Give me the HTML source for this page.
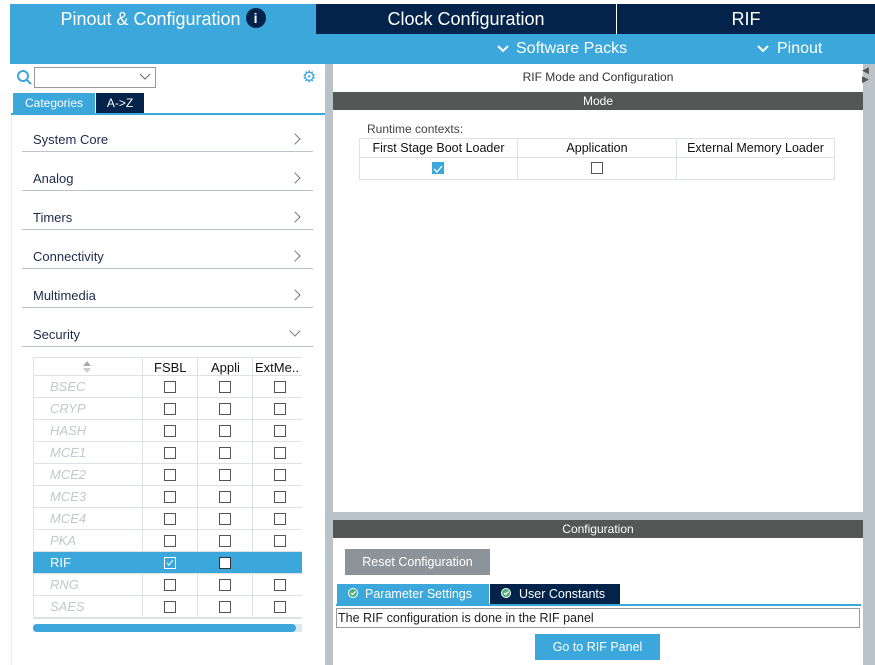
<!DOCTYPE html><html><head><style>
*{margin:0;padding:0;box-sizing:border-box}
body{width:875px;height:665px;overflow:hidden;background:#fff;font-family:"Liberation Sans",sans-serif;position:relative}
.a{position:absolute}
.cb{position:absolute;width:12px;height:12px;border:1px solid #555;background:#fff}
.cat{position:absolute;left:22px;width:291px;height:39px;border-bottom:1px solid #b9c3c9;font-size:13px;color:#1c2a4a}
.cat span{position:absolute;left:11px;bottom:4px}
.cat i{position:absolute;right:14px;bottom:8px;width:8px;height:8px;border-right:1px solid #777;border-top:1px solid #777;transform:rotate(45deg)}
.row{position:absolute;left:33px;width:269px;height:22px;border-bottom:1px solid #dde2e5}
.row span{position:absolute;left:17px;top:3px;font-style:italic;color:#c2c8cc;font-size:13px}
</style></head><body>
<div class="a" style="left:10px;top:4px;width:306px;height:30px;background:#3ca7db;color:#fff;font-size:18px;text-align:center;line-height:30px">Pinout &amp; Configuration <span style="display:inline-block;width:20px;height:20px;border-radius:50%;background:#03234b;color:#fff;font-size:14px;line-height:20px;font-weight:bold;vertical-align:2px">i</span></div>
<div class="a" style="left:316px;top:4px;width:300px;height:30px;background:#03234b;color:#fff;font-size:18px;text-align:center;line-height:30px">Clock Configuration</div>
<div class="a" style="left:617px;top:4px;width:258px;height:30px;background:#03234b;color:#fff;font-size:18px;text-align:center;line-height:30px">RIF</div>
<div class="a" style="left:10px;top:34px;width:865px;height:30px;background:#3ca7db"></div>
<div class="a" style="left:516px;top:40px;color:#fff;font-size:16px">Software Packs</div>
<div class="a" style="left:777px;top:40px;color:#fff;font-size:16px">Pinout</div>
<svg class="a" style="left:496px;top:44px" width="14" height="10"><path d="M2 2l5 5 5-5" stroke="#fff" stroke-width="2" fill="none"/></svg>
<svg class="a" style="left:756px;top:44px" width="14" height="10"><path d="M2 2l5 5 5-5" stroke="#fff" stroke-width="2" fill="none"/></svg>
<!-- left panel -->
<svg class="a" style="left:16px;top:69px" width="18" height="16"><circle cx="7" cy="7" r="5" stroke="#3ca7db" stroke-width="2" fill="none"/><path d="M11 11l4 4" stroke="#3ca7db" stroke-width="2"/></svg>
<div class="a" style="left:34px;top:67px;width:122px;height:21px;border:1px solid #999"></div>
<svg class="a" style="left:139px;top:72px" width="12" height="10"><path d="M1 2l5 5 5-5" stroke="#666" fill="none"/></svg>
<div class="a" style="left:302px;top:67px;font-size:16px;color:#3ca7db">⚙</div>
<div class="a" style="left:13px;top:93px;width:82px;height:20px;background:#3ca7db;color:#fff;font-size:12px;text-align:center;line-height:20px">Categories</div>
<div class="a" style="left:96px;top:93px;width:48px;height:20px;background:#03234b;color:#fff;font-size:12px;text-align:center;line-height:20px">A-&gt;Z</div>
<div class="a" style="left:11px;top:113px;width:314px;height:2px;background:#3ca7db"></div>
<div class="a" style="left:11px;top:115px;width:1px;height:550px;background:#e8ecee"></div>
<div class="a" style="left:325px;top:64px;width:8px;height:601px;background:#b9c3c9"></div>
<div class="cat" style="top:113px"><span>System Core</span><i></i></div>
<div class="cat" style="top:152px"><span>Analog</span><i></i></div>
<div class="cat" style="top:191px"><span>Timers</span><i></i></div>
<div class="cat" style="top:230px"><span>Connectivity</span><i></i></div>
<div class="cat" style="top:269px"><span>Multimedia</span><i></i></div>
<div class="cat" style="top:308px"><span>Security</span><i style="transform:rotate(135deg);bottom:11px"></i></div>
<div class="a" style="left:33px;top:357px;width:269px;height:262px;border:1px solid #dde2e5;border-right:none"></div>
<div class="a" style="left:142px;top:357px;width:1px;height:262px;background:#dde2e5"></div>
<div class="a" style="left:197px;top:357px;width:1px;height:262px;background:#dde2e5"></div>
<div class="a" style="left:252px;top:357px;width:1px;height:262px;background:#dde2e5"></div>
<div class="row" style="top:357px;height:19px"></div>
<svg class="a" style="left:83px;top:361px" width="8" height="12"><path d="M4 0l4 5H0z" fill="#aaa"/><path d="M4 12l4-5H0z" fill="#ccc"/></svg>
<div class="a" style="left:154px;top:360px;font-size:13px;color:#111">FSBL</div>
<div class="a" style="left:211px;top:360px;font-size:13px;color:#111">Appli</div>
<div class="a" style="left:255px;top:360px;font-size:13px;color:#111">ExtMe..</div>
<div id="rows"></div>
<script>
var n=["BSEC","CRYP","HASH","MCE1","MCE2","MCE3","MCE4","PKA","RIF","RNG","SAES"],h="";
n.forEach(function(s,i){var t=376+i*22;var rif=s=="RIF";
h+='<div class="row" style="top:'+t+'px;'+(rif?'background:#3ca7db;':'')+'"><span style="'+(rif?'color:#fff;font-style:normal':'')+'">'+s+'</span></div>';
h+='<div class="cb" style="left:164px;top:'+(t+5)+'px;'+(rif?'border-color:#fff;background:#3ca7db':'')+'">'+(rif?'<svg width="10" height="10" style="position:absolute;left:0;top:0"><path d="M2 5l2 2 4-5" stroke="#fff" fill="none"/></svg>':'')+'</div>';
h+='<div class="cb" style="left:219px;top:'+(t+5)+'px;'+(rif?'border-color:#333':'')+'"></div>';
if(!rif)h+='<div class="cb" style="left:274px;top:'+(t+5)+'px"></div>';});
document.getElementById('rows').innerHTML=h;
</script>
<div class="a" style="left:33px;top:624px;width:269px;height:8px;background:#dbe9f4"></div>
<div class="a" style="left:33px;top:624px;width:263px;height:8px;background:#3ca7db;border-radius:4px"></div>
<!-- right panel -->
<div class="a" style="left:863px;top:64px;width:12px;height:601px;background:#b9c3c9"></div>
<div class="a" style="left:333px;top:512px;width:530px;height:8px;background:#b9c3c9"></div>
<div class="a" style="left:333px;top:70px;width:530px;text-align:center;font-size:12px;color:#333">RIF Mode and Configuration</div>
<div class="a" style="left:333px;top:92px;width:530px;height:18px;background:#555756;color:#fff;font-size:12px;text-align:center;line-height:18px">Mode</div>
<div class="a" style="left:367px;top:122px;font-size:12px;color:#444">Runtime contexts:</div>
<div class="a" style="left:359px;top:138px;width:476px;height:42px;border:1px solid #dde2e5"></div>
<div class="a" style="left:360px;top:157px;width:474px;height:1px;background:#dde2e5"></div>
<div class="a" style="left:517px;top:138px;width:1px;height:42px;background:#dde2e5"></div>
<div class="a" style="left:676px;top:138px;width:1px;height:42px;background:#dde2e5"></div>
<div class="a" style="left:360px;top:141px;width:157px;text-align:center;font-size:12.5px;color:#111">First Stage Boot Loader</div>
<div class="a" style="left:518px;top:141px;width:158px;text-align:center;font-size:12.5px;color:#111">Application</div>
<div class="a" style="left:677px;top:141px;width:157px;text-align:center;font-size:12.5px;color:#111">External Memory Loader</div>
<div class="a" style="left:432px;top:162px;width:12px;height:12px;background:#3ca7db"><svg width="12" height="12"><path d="M2 6l3 3 5-6" stroke="#fff" stroke-width="1.3" fill="none"/></svg></div>
<div class="cb" style="left:591px;top:162px"></div>
<div class="a" style="left:862px;top:66px;font-size:9px;color:#555;line-height:9px">◀<br>▶</div>
<div class="a" style="left:333px;top:520px;width:530px;height:18px;background:#555756;color:#fff;font-size:12px;text-align:center;line-height:18px">Configuration</div>
<div class="a" style="left:345px;top:549px;width:145px;height:26px;background:#8d9499;color:#fff;font-size:12.5px;text-align:center;line-height:26px">Reset Configuration</div>
<div class="a" style="left:337px;top:584px;width:152px;height:20px;background:#3ca7db;color:#fff;font-size:12.5px;line-height:20px;padding-left:28px">Parameter Settings</div>
<div class="a" style="left:490px;top:584px;width:130px;height:20px;background:#03234b;color:#fff;font-size:12.5px;line-height:20px;padding-left:29px">User Constants</div>
<svg class="a" style="left:347px;top:587px" width="14" height="14"><circle cx="6" cy="6" r="5" fill="#fff"/><circle cx="6" cy="6" r="4" fill="#4cae7a"/><path d="M4 6l1.5 1.5 3-3" stroke="#fff" stroke-width="1.3" fill="none"/></svg>
<svg class="a" style="left:500px;top:587px" width="14" height="14"><circle cx="6" cy="6" r="5" fill="#fff"/><circle cx="6" cy="6" r="4" fill="#4cae7a"/><path d="M4 6l1.5 1.5 3-3" stroke="#fff" stroke-width="1.3" fill="none"/></svg>
<div class="a" style="left:336px;top:604px;width:525px;height:2px;background:#3ca7db"></div>
<div class="a" style="left:336px;top:608px;width:524px;height:20px;border:1px solid #999;font-size:12.5px;color:#222;line-height:18px;padding-left:1px">The RIF configuration is done in the RIF panel</div>
<div class="a" style="left:535px;top:634px;width:125px;height:26px;background:#3ca7db;color:#fff;font-size:12.5px;text-align:center;line-height:26px">Go to RIF Panel</div>
</body></html>
